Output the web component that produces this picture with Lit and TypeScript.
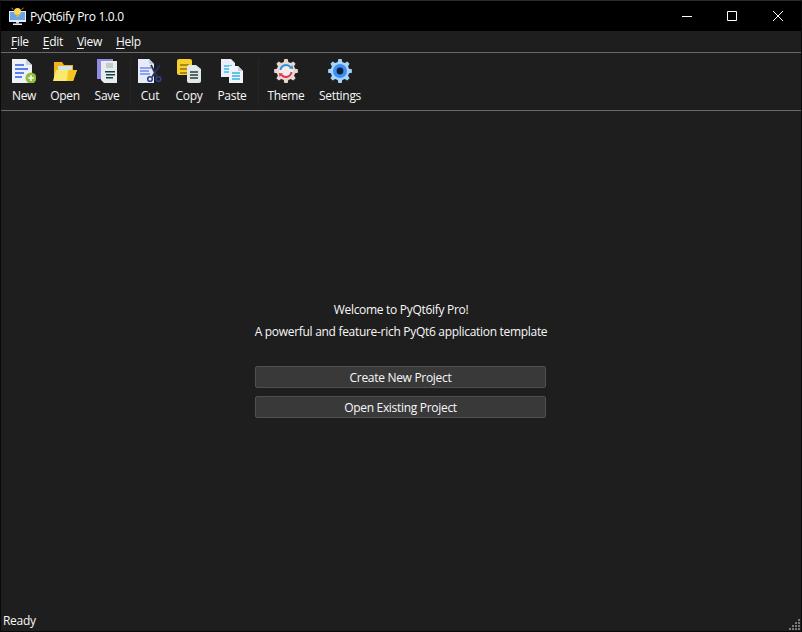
import { LitElement, css, html, svg } from 'lit'
import { customElement } from 'lit/decorators.js'

type ToolItem = {
  label: string
  width: number
  icon: ReturnType<typeof svg>
  groupEnd?: boolean
}

// 8 tooth gear centred in the 24 box
function gearPath(outer = 12, inner = 9.4): string {
  const points: string[] = []
  const teeth = 8
  for (let i = 0; i < teeth; i++) {
    const mid = (i / teeth) * Math.PI * 2
    const step = Math.PI / teeth
    const corners: [number, number][] = [
      [inner, mid - step * 0.62],
      [outer, mid - step * 0.36],
      [outer, mid + step * 0.36],
      [inner, mid + step * 0.62],
    ]
    for (const [r, a] of corners) {
      points.push(`${(12 + r * Math.sin(a)).toFixed(2)} ${(12 - r * Math.cos(a)).toFixed(2)}`)
    }
  }
  return `M${points.join('L')}z`
}

const icons = {
  newFile: svg`
    <path d="M0 0h14l6 6v18H0z" fill="#eef1f8"/>
    <path d="M14 0l6 6h-6z" fill="#c9d0de"/>
    <path d="M3 5h9v2H3zM3 9h13v2H3zM3 13h9v2H3zM3 17h7v2H3z" fill="#5a80ea"/>
    <circle cx="19" cy="19" r="5.500" fill="#8fbf3a"/>
    <path d="M16 18.200h2.200V16h1.600v2.200H22v1.600h-2.200V22h-1.600v-2.200H16z" fill="#f2f7e6"/>`,
  open: svg`
    <path d="M1 3h8l2 3h9v16H1z" fill="#f3b11c"/>
    <path d="M5 7h14v6H5z" fill="#cfe3e8"/>
    <path d="M3 11h21l-4 11H0z" fill="#fbe86e"/>
    <path d="M15 11h9l-4 11h-6z" fill="#f7c61e"/>`,
  save: svg`
    <path d="M2 0h16v20H2z" fill="#8f8ce6"/>
    <path d="M6 2h16v22H9l-3-3z" fill="#e9ecee"/>
    <path d="M11 4h7v5h-7z" fill="#c3ccca"/>
    <path d="M10 12h10v1.600H10zM11 15h9v1.600h-9zM11 18h7v1.600h-7z" fill="#12403f"/>`,
  cut: svg`
    <path d="M0 0h11l5 5v19H0z" fill="#e6ebfa"/>
    <path d="M11 0l5 5h-5z" fill="#c4cde6"/>
    <path d="M2 8h11v2H2zM2 11h9v2H2zM2 14h10v2H2z" fill="#8ea2f0"/>
    <path d="M13 6l6 12M22 6l-8 12" stroke="#27335f" stroke-width="1.800" fill="none"/>
    <circle cx="12" cy="20" r="2.300" fill="none" stroke="#2d3f8f" stroke-width="1.600"/>
    <circle cx="20.500" cy="20" r="2.300" fill="none" stroke="#2d3f8f" stroke-width="1.600"/>`,
  copy: svg`
    <path d="M0 2a2 2 0 0 1 2-2h11a2 2 0 0 1 2 2v14H2a2 2 0 0 1-2-2z" fill="#f9cf2a"/>
    <path d="M3 5h9v2H3zM3 9h7v2H3zM3 13h7v2H3z" fill="#a88a1c"/>
    <path d="M10 8a2 2 0 0 1 2-2h7l5 4v12a2 2 0 0 1-2 2H12a2 2 0 0 1-2-2z" fill="#dfe9e8"/>
    <path d="M13 12h8v2h-8zM13 15h8v2h-8zM13 18h8v2h-8z" fill="#59686a"/>`,
  paste: svg`
    <path d="M1 0h10l4 4v14H1z" fill="#e9eef8"/>
    <path d="M4 6h8v2H4zM4 9h8v2H4zM4 12h8v2H4z" fill="#69c9ec"/>
    <path d="M9 7h9l5 5v12H9z" fill="#f0f3f8"/>
    <path d="M18 7l5 5h-5z" fill="#c6cedd"/>
    <path d="M12 13h8v2h-8zM12 16h8v2h-8zM12 19h8v2h-8z" fill="#63c4e8"/>`,
  theme: svg`
    <path d=${gearPath()} fill="#e8d8d0"/>
    <circle cx="12" cy="12" r="7" fill="#f4ece8"/>
    <path d="M6.500 11a5.600 5.600 0 0 1 10-2.800" fill="none" stroke="#2f8fe0" stroke-width="2"/>
    <path d="M17.500 13a5.600 5.600 0 0 1-10 2.800" fill="none" stroke="#e0325f" stroke-width="2"/>
    <path d="M18.500 6l.5 4-4-.5z" fill="#2f8fe0"/>
    <path d="M5.500 18l-.5-4 4 .5z" fill="#e0325f"/>`,
  settings: svg`
    <path d=${gearPath()} fill="#a6d4fa"/>
    <circle cx="12" cy="12" r="7" fill="#3d8ff2"/>
    <circle cx="12" cy="12" r="3.400" fill="#102039"/>`,
}

const tools: ToolItem[] = [
  { label: 'New', width: 38, icon: icons.newFile },
  { label: 'Open', width: 44, icon: icons.open },
  { label: 'Save', width: 40, icon: icons.save, groupEnd: true },
  { label: 'Cut', width: 32, icon: icons.cut },
  { label: 'Copy', width: 46, icon: icons.copy },
  { label: 'Paste', width: 40, icon: icons.paste, groupEnd: true },
  { label: 'Theme', width: 54, icon: icons.theme },
  { label: 'Settings', width: 54, icon: icons.settings },
]

@customElement('app-root')
export class AppRoot extends LitElement {
  static styles = css`
    :host {
      display: block;
      width: 802px;
      height: 632px;
      font-family: 'Open Sans', 'Noto Sans', sans-serif;
      font-size: 12px;
      letter-spacing: -0.3px;
      color: #f8f8f8;
    }

    .window {
      display: flex;
      flex-direction: column;
      box-sizing: border-box;
      height: 100%;
      border: 1px solid #0a0a0a;
      border-top-color: #2b2b2b;
      background: #1e1e1e;
    }

    .titlebar {
      display: flex;
      align-items: center;
      flex: none;
      height: 30px;
      background: #000;
      padding: 0 0.5px 0 8px;
    }

    .app-icon {
      width: 17px;
      height: 18px;
      margin-right: 4px;
    }

    .title {
      flex: 1;
      color: #fff;
    }

    .caption {
      display: flex;
      align-items: center;
      justify-content: center;
      width: 45px;
      height: 30px;
    }

    .caption.close {
      margin-left: 1px;
    }

    .caption svg {
      width: 10px;
      height: 10px;
      fill: none;
      stroke: #fff;
      stroke-width: 1;
    }

    .menubar {
      display: flex;
      flex: none;
      align-items: center;
      gap: 14px;
      height: 21px;
      padding-left: 10px;
      border-bottom: 1px solid #6a6a6a;
    }

    .menubar u {
      text-underline-offset: 2px;
    }

    .toolbar {
      display: flex;
      flex: none;
      height: 57px;
      padding-left: 4px;
      border-bottom: 1px solid #6a6a6a;
    }

    .tool {
      display: flex;
      flex-direction: column;
      align-items: center;
      padding-top: 6px;
    }

    .tool svg {
      width: 24px;
      height: 24px;
      display: block;
    }

    .tool span {
      margin-top: 4px;
      line-height: 17px;
      white-space: nowrap;
    }

    .sep {
      flex: none;
      width: 1px;
      height: 46px;
      margin: 6px 3px 0;
      background: #262626;
    }

    .sep.late {
      margin: 6px 0 0 6px;
    }

    .content {
      display: flex;
      flex: 1;
      flex-direction: column;
      align-items: center;
      justify-content: center;
      min-height: 0;
      padding-bottom: 1px;
    }

    .welcome {
      line-height: 22px;
      text-align: center;
    }

    .actions {
      display: flex;
      flex-direction: column;
      gap: 8px;
      width: 291px;
      margin: 23px 1px 0 0;
    }

    button {
      height: 22px;
      padding: 0;
      border: 1px solid #505050;
      border-radius: 2px;
      background: #393939;
      color: inherit;
      font: inherit;
      letter-spacing: inherit;
    }

    .statusbar {
      display: flex;
      flex: none;
      align-items: center;
      justify-content: space-between;
      height: 22px;
      padding: 2px 0 0 2px;
    }

    .grip {
      width: 12px;
      height: 12px;
      align-self: flex-end;
    }
  `

  private renderTool(tool: ToolItem) {
    return html`
      <div class="tool" style="width:${tool.width}px">
        <svg viewBox="0 0 24 24" aria-hidden="true">${tool.icon}</svg>
        <span>${tool.label}</span>
      </div>
      ${tool.groupEnd ? html`<div class="sep ${tool.label === 'Paste' ? 'late' : ''}"></div>` : ''}
    `
  }

  render() {
    return html`
      <div class="window">
        <div class="titlebar">
          <svg class="app-icon" viewBox="0 0 17 18" aria-hidden="true">
            <path d="M0 4h17v11H0z" fill="#e4ecf7"/>
            <path d="M1 5h15v8H1z" fill="#6aa3e8"/>
            <circle cx="8.500" cy="4.500" r="3.500" fill="#ffd84a"/>
            <path d="M7.500 7h2v3h-2z" fill="#e8b93a"/>
            <path d="M7 15h3v1.500H7z" fill="#c9d3e0"/>
            <path d="M4 16.500h9V18H4z" fill="#e6ecf5"/>
            <path d="M2.500 1l2 1.500M14.500 1l-2 1.500" stroke="#e89b2a" stroke-width="1"/>
          </svg>
          <div class="title">PyQt6ify Pro 1.0.0</div>
          <div class="caption"><svg viewBox="0 0 10 10"><path d="M0 5.500h10"/></svg></div>
          <div class="caption"><svg viewBox="0 0 10 10"><path d="M.5.5h9v9h-9z"/></svg></div>
          <div class="caption close"><svg viewBox="0 0 10 10"><path d="M0 0l10 10M10 0L0 10"/></svg></div>
        </div>
        <div class="menubar">
          <span><u>F</u>ile</span>
          <span><u>E</u>dit</span>
          <span><u>V</u>iew</span>
          <span><u>H</u>elp</span>
        </div>
        <div class="toolbar">${tools.map((tool) => this.renderTool(tool))}</div>
        <div class="content">
          <div class="welcome">Welcome to PyQt6ify Pro!</div>
          <div class="welcome">A powerful and feature-rich PyQt6 application template</div>
          <div class="actions">
            <button type="button">Create New Project</button>
            <button type="button">Open Existing Project</button>
          </div>
        </div>
        <div class="statusbar">
          <span>Ready</span>
          <svg class="grip" viewBox="0 0 12 12" aria-hidden="true">
            <path d="M9 0h2v2H9zM6 3h2v2H6zM9 3h2v2H9zM3 6h2v2H3zM6 6h2v2H6zM9 6h2v2H9zM0 9h2v2H0zM3 9h2v2H3zM6 9h2v2H6zM9 9h2v2H9z" fill="#7a7a7a"/>
          </svg>
        </div>
      </div>
    `
  }
}
